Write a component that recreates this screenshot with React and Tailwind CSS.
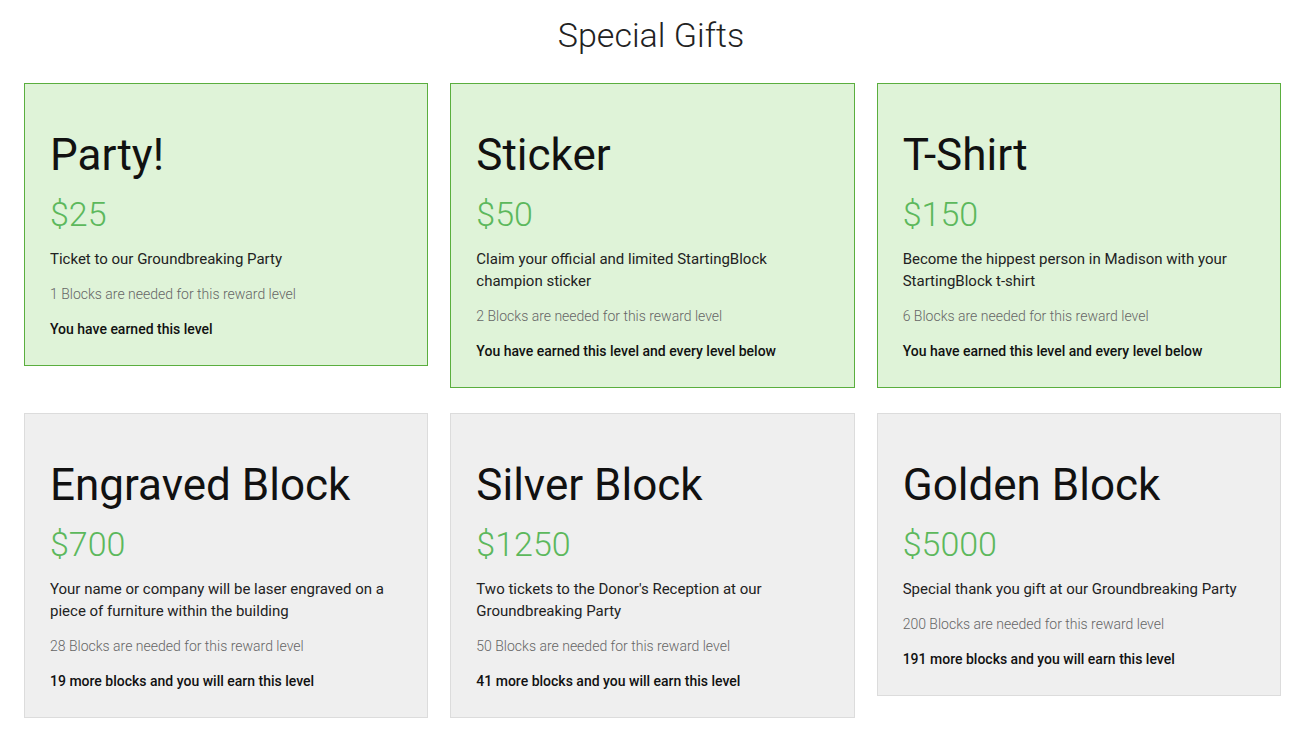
import React from "react";

const gifts = [
  { title: "Party!", price: "$25", desc: "Ticket to our Groundbreaking Party", blocks: "1 Blocks are needed for this reward level", status: "You have earned this level", earned: true },
  { title: "Sticker", price: "$50", desc: "Claim your official and limited StartingBlock champion sticker", blocks: "2 Blocks are needed for this reward level", status: "You have earned this level and every level below", earned: true },
  { title: "T-Shirt", price: "$150", desc: "Become the hippest person in Madison with your StartingBlock t-shirt", blocks: "6 Blocks are needed for this reward level", status: "You have earned this level and every level below", earned: true },
  { title: "Engraved Block", price: "$700", desc: "Your name or company will be laser engraved on a piece of furniture within the building", blocks: "28 Blocks are needed for this reward level", status: "19 more blocks and you will earn this level", earned: false },
  { title: "Silver Block", price: "$1250", desc: "Two tickets to the Donor's Reception at our Groundbreaking Party", blocks: "50 Blocks are needed for this reward level", status: "41 more blocks and you will earn this level", earned: false },
  { title: "Golden Block", price: "$5000", desc: "Special thank you gift at our Groundbreaking Party", blocks: "200 Blocks are needed for this reward level", status: "191 more blocks and you will earn this level", earned: false },
];

function Card({ g }) {
  return (
    <div
      className={
        "border px-[25px] pt-[47px] pb-[26px] " +
        (g.earned ? "bg-[#dff3d8] border-[#5aae3e]" : "bg-[#efefef] border-[#dcdcdc]")
      }
    >
      <h3 className="text-[44px] leading-[1.1] font-normal text-[#111]">{g.title}</h3>
      <div className="mt-[16px] text-[34px] leading-[1.1] font-light text-[#5cb85c]">{g.price}</div>
      <p className="mt-[15px] text-[15px] leading-[22px] text-[#222]">{g.desc}</p>
      <p className="mt-[14px] text-[14px] leading-[20px] font-light text-[#666]">{g.blocks}</p>
      <p className="mt-[15px] text-[14px] leading-[20px] font-medium text-[#111]">{g.status}</p>
    </div>
  );
}

export default function App() {
  return (
    <div className="min-h-[731px] bg-white" style={{ fontFamily: "Roboto, 'Liberation Sans', sans-serif" }}>
      <h1 className="pt-[17px] text-center text-[34px] leading-[1.1] font-light text-[#222]">Special Gifts</h1>
      <div className="mt-[29px] grid grid-cols-3 items-start gap-x-[22px] gap-y-[25px] pl-[24px] pr-[21px]">
        {gifts.map((g) => (
          <Card key={g.title} g={g} />
        ))}
      </div>
    </div>
  );
}
